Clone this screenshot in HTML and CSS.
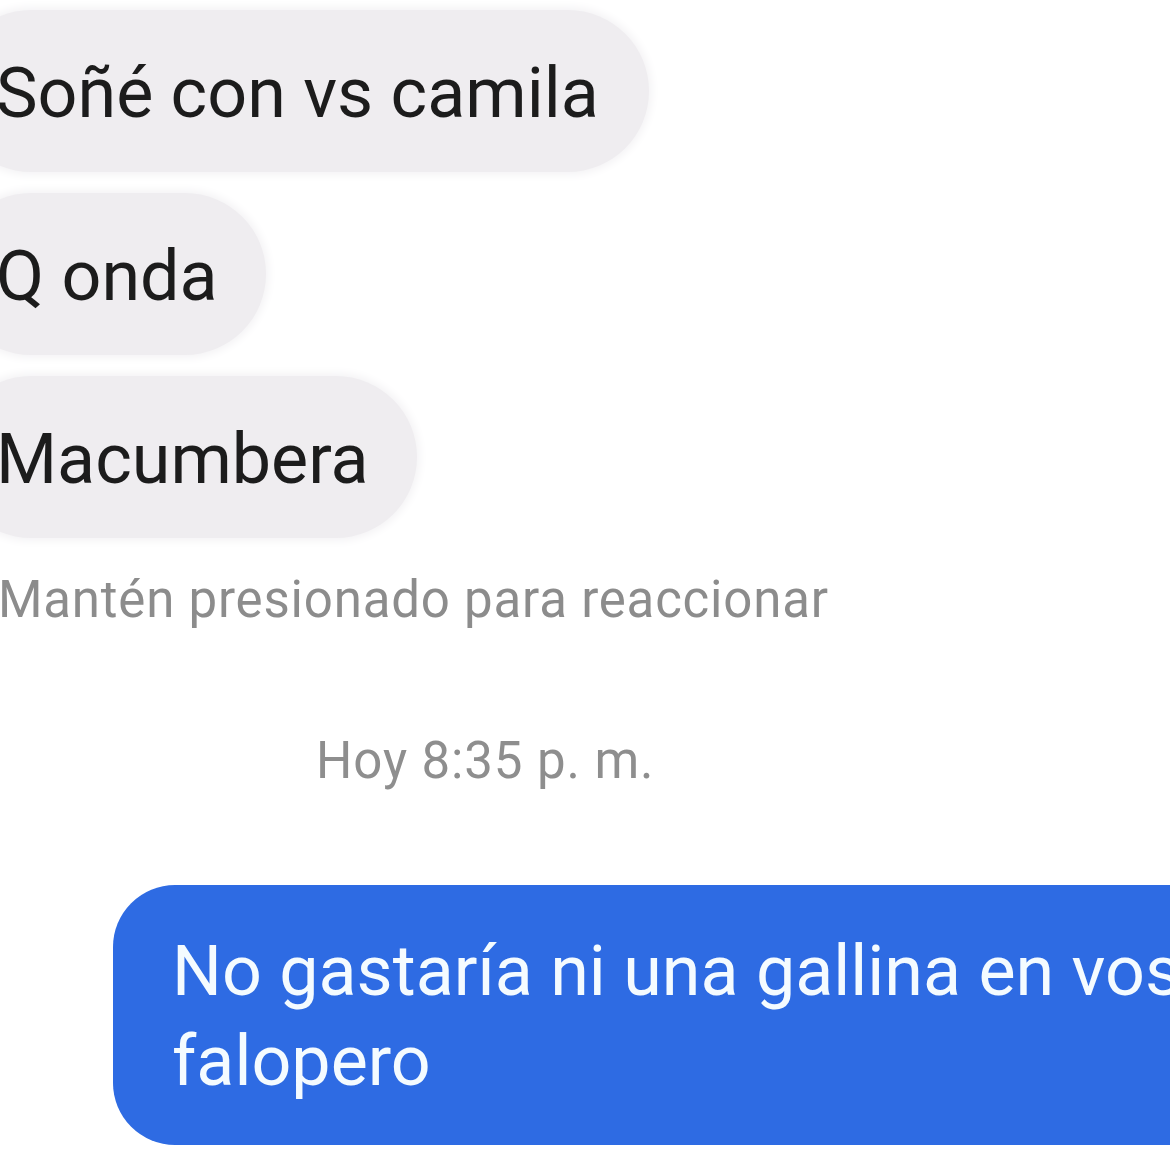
FILE: index.html
```html
<!DOCTYPE html>
<html lang="es">
<head>
<meta charset="utf-8">
<link rel="stylesheet" href="styles.css">
</head>
<body>
<div class="chat">
  <div class="incoming">
    <div class="bubble b1">Soñé con vs camila</div>
    <div class="bubble b2">Q onda</div>
    <div class="bubble b3">Macumbera</div>
  </div>
  <div class="hint">Mantén presionado para reaccionar</div>
  <div class="stamp">Hoy 8:35 p. m.</div>
  <div class="outgoing">
    <div class="sent">No gastaría ni una gallina en vos falopero</div>
  </div>
</div>
</body>
</html>
```
FILE: styles.css
```css
html, body {
  margin: 0;
  padding: 0;
  background: #ffffff;
}
body {
  width: 1170px;
  height: 1170px;
  overflow: hidden;
  font-family: Roboto, "Liberation Sans", sans-serif;
}
.chat {
  display: flex;
  flex-direction: column;
  padding-top: 10px;
}
.incoming {
  display: flex;
  flex-direction: column;
  align-items: flex-start;
  gap: 21px;
  margin-left: -50px;
}
.bubble {
  background: #efedf0;
  color: #1c1c1c;
  font-size: 70px;
  line-height: 70px;
  height: 162px;
  box-sizing: border-box;
  padding: 48px 48px 44px 46px;
  border-radius: 81px;
  white-space: nowrap;
  box-shadow: 0 0 8px 3px #f4f3f5;
}
.b1 {
  padding-right: 50px;
}
.hint {
  margin-top: 32px;
  margin-left: -2px;
  color: #8c8c8c;
  font-size: 51px;
  line-height: 60px;
  letter-spacing: 0.8px;
  white-space: nowrap;
}
.stamp {
  margin-top: 101px;
  margin-left: 316px;
  color: #8e8e8e;
  font-size: 51px;
  line-height: 60px;
  letter-spacing: 0.9px;
  white-space: nowrap;
}
.outgoing {
  margin-top: 94px;
  display: flex;
}
.sent {
  margin-left: 113px;
  width: 1200px;
  flex: none;
  box-sizing: border-box;
  background: #2e6be3;
  color: #f4fbff;
  font-size: 70px;
  line-height: 90px;
  padding: 41px 40px 39px 59px;
  border-radius: 62px 0 0 62px;
}
```
